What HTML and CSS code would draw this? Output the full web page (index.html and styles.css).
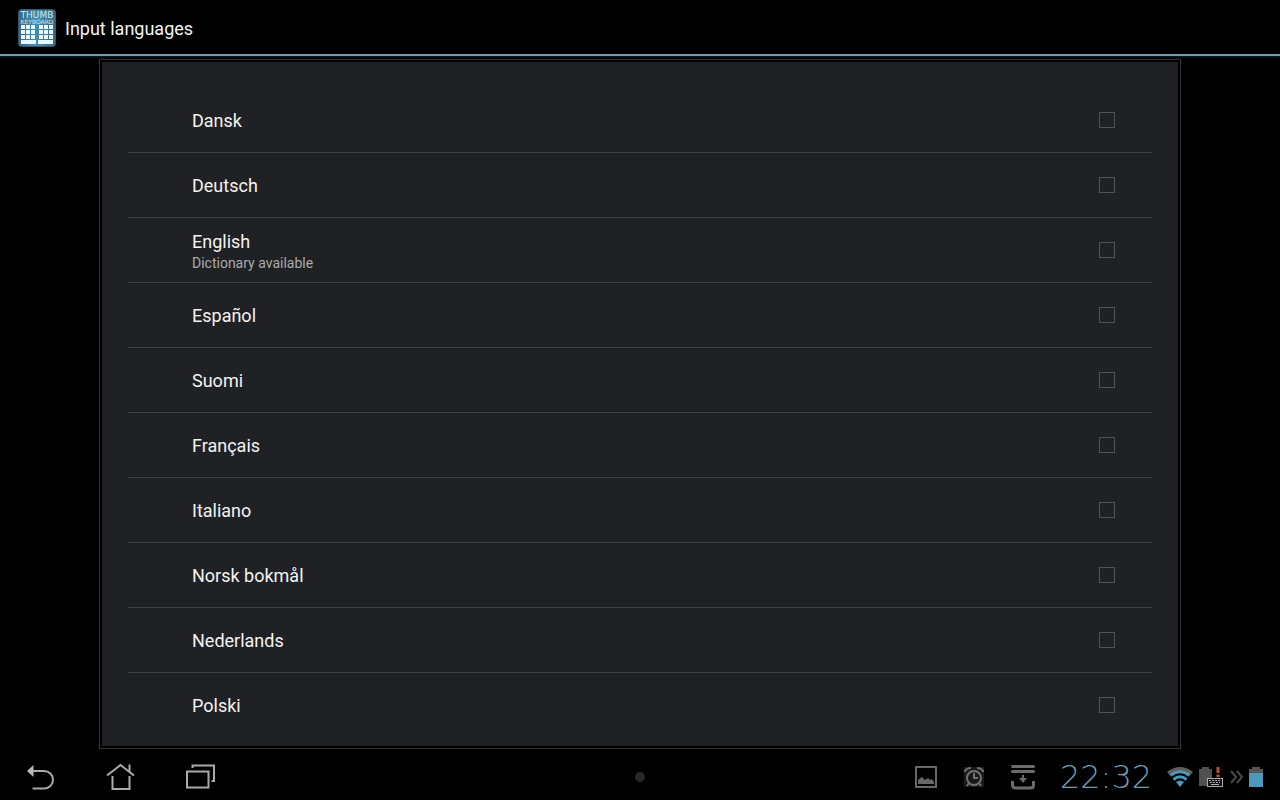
FILE: index.html
```html
<!DOCTYPE html>
<html lang="en">
<head>
<meta charset="utf-8">
<meta name="viewport" content="width=device-width, initial-scale=1">
<title>Input languages</title>
<link rel="stylesheet" href="styles.css">
</head>
<body>
<div class="screen">
  <header class="action-bar">
    <svg class="app-icon" width="40" height="40" viewBox="0 0 40 40" role="img" aria-label="Thumb Keyboard">
      <defs>
        <linearGradient id="tile" x1="0" x2="1" y1="0" y2="0">
          <stop offset="0" stop-color="#3f6780"/><stop offset=".5" stop-color="#468fae"/><stop offset="1" stop-color="#3f6780"/>
        </linearGradient>
      </defs>
      <rect x="1.5" y="1.5" width="37" height="37" rx="3" fill="url(#tile)" stroke="#34566b"/>
      <text class="logo-top" x="20" y="10" text-anchor="middle">THUMB</text>
      <text class="logo-sub" x="20" y="16" text-anchor="middle">KEYBOARD</text>
      <path fill="#e4faff" d="M4 17h4v4H4zM9 17h4v4H9zM14 17h4v4h-4zM4 22h4v4H4zM9 22h4v4H9zM14 22h4v4h-4zM4 27h4v4H4zM9 27h4v4H9zM14 27h4v4h-4zM4 32h15v4H4zM22 17h4v4h-4zM27 17h4v4h-4zM32 17h4v4h-4zM22 22h4v4h-4zM27 22h4v4h-4zM32 22h4v4h-4zM22 27h4v4h-4zM27 27h4v4h-4zM32 27h4v4h-4zM21 32h15v4H21z"/>
    </svg>
    <h1 class="title">Input languages</h1>
  </header>

  <main class="content">
    <div class="panel">
      <ul class="languages">
        <li><label class="row"><span class="label">Dansk</span><input class="check" type="checkbox"></label></li>
        <li><label class="row"><span class="label">Deutsch</span><input class="check" type="checkbox"></label></li>
        <li><label class="row"><span class="label">English<small class="summary">Dictionary available</small></span><input class="check" type="checkbox"></label></li>
        <li><label class="row"><span class="label">Español</span><input class="check" type="checkbox"></label></li>
        <li><label class="row"><span class="label">Suomi</span><input class="check" type="checkbox"></label></li>
        <li><label class="row"><span class="label">Français</span><input class="check" type="checkbox"></label></li>
        <li><label class="row"><span class="label">Italiano</span><input class="check" type="checkbox"></label></li>
        <li><label class="row"><span class="label">Norsk bokmål</span><input class="check" type="checkbox"></label></li>
        <li><label class="row"><span class="label">Nederlands</span><input class="check" type="checkbox"></label></li>
        <li><label class="row"><span class="label">Polski</span><input class="check" type="checkbox"></label></li>
      </ul>
    </div>
  </main>

  <footer class="system-bar">
    <nav class="nav">
      <button class="nav-button" type="button" aria-label="Back">
        <svg width="32" height="32" viewBox="0 0 32 32"><path class="line" d="M8 7h12a9 8.750 0 0 1 0 17.500H8.500"/><path fill="#b8b8b8" d="M3 7 9.500 1v12z"/></svg>
      </button>
      <button class="nav-button" type="button" aria-label="Home">
        <svg width="32" height="32" viewBox="0 0 32 32"><path class="line" d="M3 11.500 16.500 1 30 11.500M25.500 7.500V.500M8.500 12v13h17V12"/></svg>
      </button>
      <button class="nav-button" type="button" aria-label="Recent apps">
        <svg width="32" height="32" viewBox="0 0 32 32"><path class="line" d="M3 7.500h21.500v16H3zM8.500 4V1.500H30V17h-2.500"/></svg>
      </button>
    </nav>
    <span class="dot"></span>
    <div class="status">
      <svg class="s-picture" width="22" height="24" viewBox="0 0 22 24"><path fill="none" stroke="#686868" stroke-width="2" d="M1 2h20v20H1z"/><path fill="#686868" d="M3 19v-4l4-3 3 3 3-2 2 2 2-1 2 3v2z"/></svg>
      <svg class="s-alarm" width="22" height="24" viewBox="0 0 22 24"><rect x="1" y="2" width="20" height="20" fill="#191919"/><g fill="none" stroke="#707070" stroke-width="2"><circle cx="11" cy="13" r="7"/><path d="M11 8v5h4M6 18l-2 3M16 18l2 3M1.500 7Q3 3 8 3M20.500 7Q19 3 14 3"/></g></svg>
      <svg class="s-download" width="26" height="26" viewBox="0 0 26 26"><g fill="none" stroke="#6c6c6c"><path stroke-width="3" stroke-linecap="round" d="M2.500 2.500h21M2.500 7.500h21"/><path stroke-width="3" d="M2.500 17v4q0 3 3 3h15q3 0 3-3v-4"/><path stroke-width="2" d="M13 11v5"/></g><path fill="#6c6c6c" d="M9 14h8l-4 5z"/></svg>
      <time class="clock" datetime="22:32">22:32</time>
      <svg class="s-wifi" width="26" height="24" viewBox="0 0 26 24"><path fill="#5f5f5f" d="M0 7Q13-3 26 7l-2.500 3Q13 2 2.500 10z"/><g fill="none" stroke="#4a99bb" stroke-width="3"><path d="M3.500 10.500Q13 3 22.500 10.500M6.500 14.500Q13 9 19.500 14.500"/></g><path fill="#4a99bb" d="M9 17q4-3 8 0l-4 5z"/></svg>
      <svg class="s-keyboard" width="24" height="24" viewBox="0 0 24 24"><path fill="#505050" d="M0 4h3V2h7v2h3v17H0z"/><path stroke="#b8503f" stroke-width="3" d="M19 2v6M19 9.500v2.500"/><rect x="8.500" y="13.500" width="15" height="8" fill="#101015" stroke="#a9a9ae"/><path stroke="#a9a9ae" stroke-dasharray="2 1" d="M10 15.500h12M11 17.500h10"/><path stroke="#a9a9ae" d="M12 19.500h8"/></svg>
      <svg class="s-more" width="14" height="24" viewBox="0 0 14 24"><path fill="none" stroke="#484848" stroke-width="2" d="m1 6 5 6-5 6M7 6l5 6-5 6"/></svg>
      <svg class="s-battery" width="14" height="24" viewBox="0 0 14 24"><path fill="#555" d="M0 4h3V2h8v2h3v5H0z"/><path fill="#4a99bb" d="M0 8h14v14H0z"/></svg>
    </div>
  </footer>
</div>
</body>
</html>
```
FILE: styles.css
```css
* {
  box-sizing: border-box;
}

body {
  margin: 0;
  background: #000;
  color: #f3f3f3;
  font-family: Roboto, "Noto Sans", sans-serif;
}

.screen {
  display: flex;
  flex-direction: column;
  min-height: 100vh;
}

.action-bar {
  display: flex;
  align-items: center;
  gap: 8px;
  padding: 8px 17px 6px;
  border-bottom: 2px solid #7699ab;
  box-shadow: 0 0 3px #143b52;
}

.app-icon {
  display: block;
}

.logo-top,
.logo-sub {
  font-family: "DejaVu Sans", sans-serif;
  fill: #c2edf8;
}

.logo-top {
  font-size: 9px;
}

.logo-sub {
  font-size: 6px;
}

.title {
  margin: 0;
  padding-top: 2px;
  font-size: 18px;
  line-height: 24px;
  font-weight: 400;
}

.content {
  flex: 1;
  padding: 3px 99px 4px;
}

.panel {
  padding: 2px;
  border: 1px solid #303230;
}

.languages {
  margin: 0;
  padding: 26px 26px 9px;
  list-style: none;
  background: #202124;
}

.languages li + li {
  border-top: 1px solid #404144;
}

.row {
  display: flex;
  align-items: center;
  justify-content: space-between;
  height: 64px;
  padding: 0 37px 0 64px;
}

.label {
  padding-top: 2px;
  font-size: 18px;
  line-height: 24px;
}

.summary {
  display: block;
  color: #a9aaac;
  font-size: 14px;
  line-height: 19px;
}

.check {
  appearance: none;
  width: 16px;
  height: 16px;
  margin: 0;
  border: 1px solid #515256;
}

.check:checked {
  background: #4a99bb;
}

.system-bar {
  display: grid;
  grid-template-columns: 1fr auto 1fr;
  align-items: center;
  height: 48px;
}

.nav {
  display: flex;
  gap: 48px;
  padding-left: 24px;
}

.nav-button {
  padding: 0;
  border: 0;
  background: none;
}

.nav-button svg,
.status svg {
  display: block;
}

.nav-button svg {
  margin-top: 5px;
}

.line {
  fill: none;
  stroke: #aaa;
  stroke-width: 2;
}

.dot {
  width: 10px;
  height: 10px;
  border-radius: 50%;
  background: #282828;
}

.status {
  display: flex;
  align-items: center;
  justify-content: flex-end;
  padding-right: 17px;
}

.s-alarm {
  margin-left: 26px;
}

.s-download {
  margin-left: 25px;
}

.clock {
  width: 104px;
  margin: 0 9px 0 18px;
  color: #719db4;
  font-family: "DejaVu Sans", sans-serif;
  font-size: 32px;
  font-weight: 200;
  line-height: 32px;
  text-align: center;
}

.s-keyboard {
  margin-left: 6px;
}

.s-more {
  margin: 0 5px 0 7px;
}
```
